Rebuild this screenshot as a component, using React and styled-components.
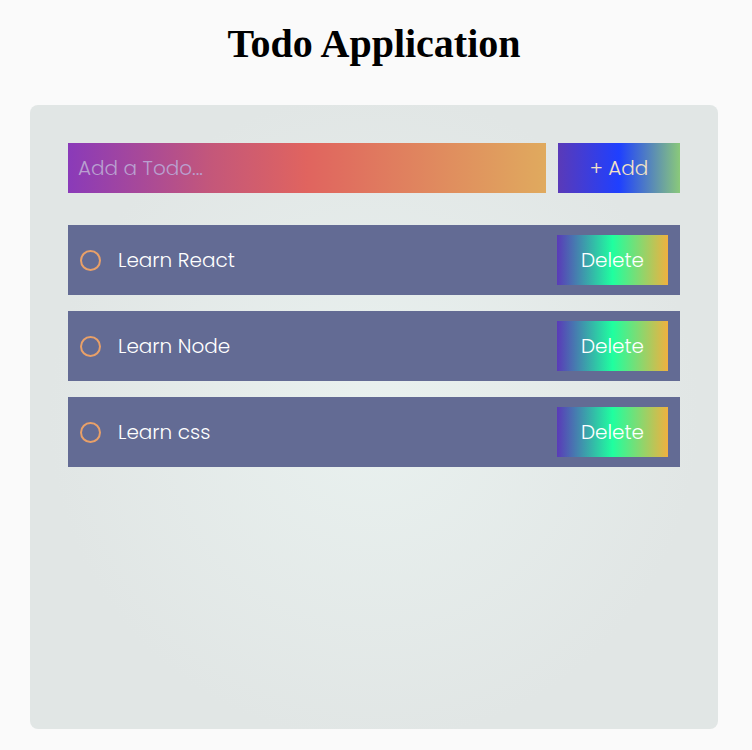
import React, { useState } from "react";
import styled, { createGlobalStyle } from "styled-components";

const Global = createGlobalStyle`
  html, body { margin: 0; padding: 0; background: #fafafa; }
  body { font-family: "Liberation Serif", serif; }
`;

const Page = styled.div`
  display: flex;
  flex-direction: column;
  align-items: center;
  padding: 21px 4px 0 0;
`;

const Title = styled.h1`
  margin: 0 0 38px;
  font-family: "Liberation Serif", "Times New Roman", serif;
  font-weight: 700;
  font-size: 40px;
  line-height: 46px;
  color: #000;
`;

const Panel = styled.div`
  box-sizing: border-box;
  width: 688px;
  height: 624px;
  padding: 38px;
  border-radius: 8px;
  background: radial-gradient(circle at 50% 50%, #e9f1ef 0%, #e1e6e5 70%);
  display: flex;
  flex-direction: column;
  gap: 32px;
`;

const Form = styled.form`
  display: flex;
  gap: 12px;
`;

const Input = styled.input`
  box-sizing: border-box;
  flex: 1;
  height: 50px;
  border: none;
  outline: none;
  padding: 0 10px;
  font-family: "Poppins", "Open Sans", sans-serif;
  font-weight: 300;
  font-size: 20px;
  color: #fff;
  background: linear-gradient(90deg, #8a3ab9 0%, #c4577a 30%, #e0645f 50%, #e0aa5e 100%);
  &::placeholder { color: #b9a0d0; }
`;

const AddButton = styled.button`
  width: 122px;
  height: 50px;
  border: none;
  font-family: "Poppins", "Open Sans", sans-serif;
  font-weight: 300;
  font-size: 20px;
  color: #f3e2c6;
  background: linear-gradient(90deg, #5a3ab8 0%, #1f40ff 50%, #8ac97a 100%);
  cursor: pointer;
`;

const List = styled.ul`
  list-style: none;
  margin: 0;
  padding: 0;
  display: flex;
  flex-direction: column;
  gap: 16px;
`;

const Item = styled.li`
  height: 70px;
  display: flex;
  align-items: center;
  padding: 0 12px;
  background: #636b94;
`;

const Circle = styled.span`
  box-sizing: border-box;
  width: 21px;
  height: 21px;
  border: 2px solid #e9a068;
  border-radius: 50%;
  flex-shrink: 0;
`;

const Label = styled.span`
  flex: 1;
  margin-left: 17px;
  font-family: "Poppins", "Open Sans", sans-serif;
  font-weight: 300;
  font-size: 20px;
  color: #fff;
`;

const DeleteButton = styled.button`
  width: 111px;
  height: 50px;
  border: none;
  font-family: "Poppins", "Open Sans", sans-serif;
  font-weight: 300;
  font-size: 20px;
  color: #fff;
  background: linear-gradient(90deg, #5a3ab8 0%, #1fff9f 50%, #f0b13f 100%);
  cursor: pointer;
`;

export default function App() {
  const [todos, setTodos] = useState(["Learn React", "Learn Node", "Learn css"]);
  const [text, setText] = useState("");
  return (
    <>
      <Global />
      <Page>
        <Title>Todo Application</Title>
        <Panel>
          <Form
            onSubmit={(e) => {
              e.preventDefault();
              if (text.trim()) setTodos([...todos, text.trim()]);
              setText("");
            }}
          >
            <Input
              placeholder="Add a Todo..."
              value={text}
              onChange={(e) => setText(e.target.value)}
            />
            <AddButton type="submit">+ Add</AddButton>
          </Form>
          <List>
            {todos.map((t, i) => (
              <Item key={i}>
                <Circle />
                <Label>{t}</Label>
                <DeleteButton onClick={() => setTodos(todos.filter((_, j) => j !== i))}>
                  Delete
                </DeleteButton>
              </Item>
            ))}
          </List>
        </Panel>
      </Page>
    </>
  );
}
